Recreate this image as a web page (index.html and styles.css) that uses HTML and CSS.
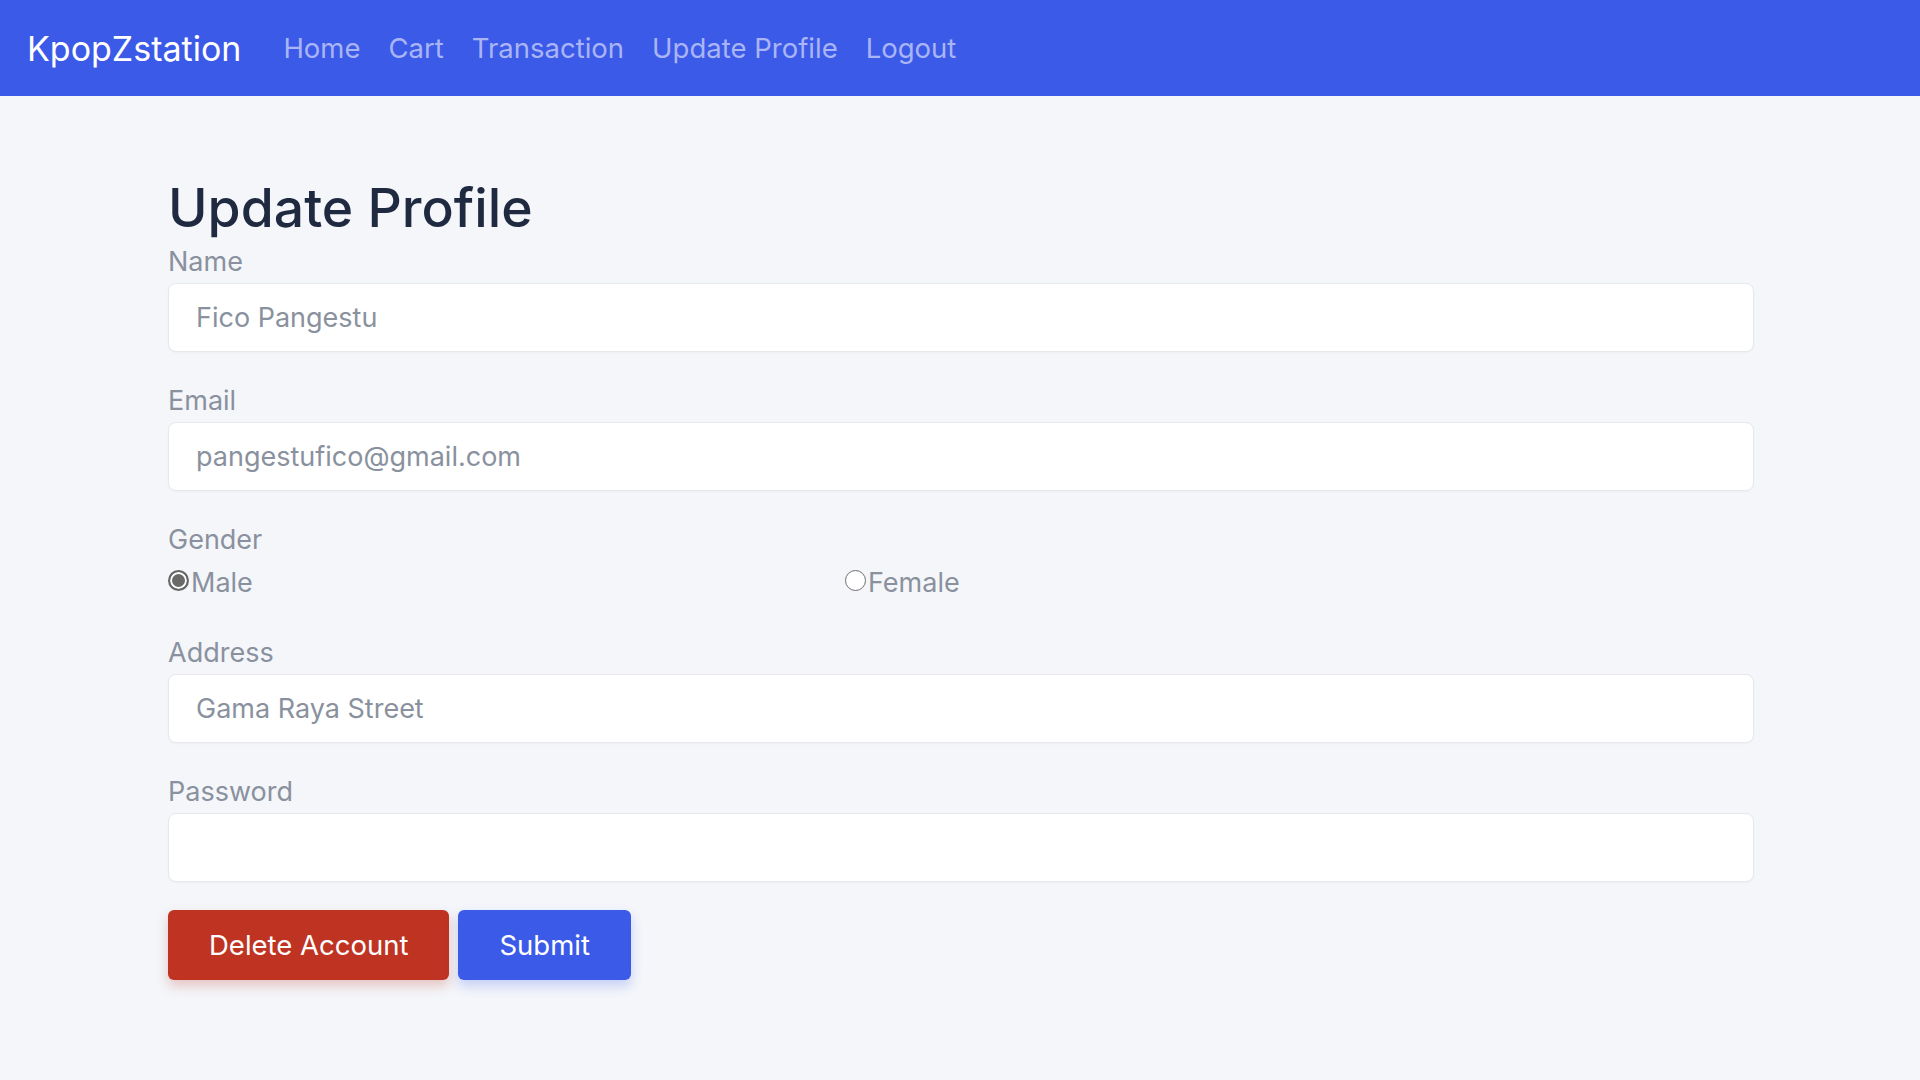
FILE: index.html
```html
<!DOCTYPE html>
<html lang="en">
<head>
    <meta charset="UTF-8">
    <title>Update Profile - KpopZstation</title>
    <link rel="stylesheet" href="styles.css">
</head>
<body>
<nav class="navbar">
    <a class="brand" href="#">KpopZstation</a>
    <ul class="nav-links">
        <li><a href="#">Home</a></li>
        <li><a href="#">Cart</a></li>
        <li><a href="#">Transaction</a></li>
        <li><a href="#">Update Profile</a></li>
        <li><a href="#">Logout</a></li>
    </ul>
</nav>
<main class="page">
    <h1 class="page-title">Update Profile</h1>
    <form class="profile-form">
        <div class="field">
            <label for="name">Name</label>
            <input id="name" type="text" value="Fico Pangestu">
        </div>
        <div class="field">
            <label for="email">Email</label>
            <input id="email" type="email" value="pangestufico@gmail.com">
        </div>
        <div class="field field-gender">
            <label>Gender</label>
            <div class="radios">
                <label class="radio"><input type="radio" name="gender" checked>Male</label>
                <label class="radio"><input type="radio" name="gender">Female</label>
            </div>
        </div>
        <div class="field">
            <label for="address">Address</label>
            <input id="address" type="text" value="Gama Raya Street">
        </div>
        <div class="field">
            <label for="password">Password</label>
            <input id="password" type="password">
        </div>
        <div class="actions">
            <button type="button" class="btn btn-delete">Delete Account</button>
            <button type="submit" class="btn btn-submit">Submit</button>
        </div>
    </form>
</main>
</body>
</html>
```

FILE: styles.css
```css
* {
    box-sizing: border-box;
}
body {
    margin: 0;
    min-height: 1080px;
    background-color: #f4f6fa;
    font-family: Inter, "Noto Sans", sans-serif;
}
.navbar {
    display: flex;
    align-items: center;
    height: 96px;
    padding: 0 27px;
    background-color: #3c5ae8;
}
.brand {
    font-size: 34px;
    color: #fff;
    text-decoration: none;
    margin-right: 42px;
}
.nav-links {
    display: flex;
    gap: 28px;
    list-style: none;
    margin: 0;
    padding: 0;
}
.nav-links a {
    font-size: 27.5px;
    color: #a9b5f4;
    text-decoration: none;
}
.page {
    padding: 82px 166px 0 168px;
}
.page-title {
    margin: 0;
    font-size: 53.5px;
    line-height: 60px;
    font-weight: 500;
    color: #1f2940;
}
.profile-form {
    margin-top: 6px;
}
.field {
    margin-bottom: 31px;
}
.field > label {
    display: block;
    font-size: 27px;
    line-height: 35px;
    color: #8a919e;
    margin-bottom: 4px;
}
.field input[type=text],
.field input[type=email],
.field input[type=password] {
    display: block;
    width: 100%;
    height: 69px;
    padding: 0 27px;
    border: 1px solid #e6e8ec;
    border-radius: 8px;
    background-color: #fff;
    box-shadow: 0 1px 2px rgba(0, 0, 0, .03);
    font-family: inherit;
    font-size: 27px;
    color: #8a919e;
    outline: none;
}
.field-gender {
    margin-bottom: 35px;
}
.radios {
    display: flex;
    margin-top: 8px;
}
.radio {
    display: flex;
    align-items: center;
    font-size: 27px;
    line-height: 35px;
    color: #8a919e;
    width: 677px;
}
.radio input {
    appearance: none;
    -webkit-appearance: none;
    flex: none;
    width: 21px;
    height: 21px;
    margin: 0 2px 5px 0;
    border: 1.5px solid #6f6f6f;
    border-radius: 50%;
    background-color: #fff;
}
.radio input:checked {
    border: 2px solid #666;
    background-color: #6a6a6a;
    box-shadow: inset 0 0 0 2px #fff;
}
.actions {
    display: flex;
    gap: 9px;
    margin-top: -3px;
}
.btn {
    height: 70px;
    padding: 0 41px;
    border: 0;
    border-radius: 6px;
    font-family: inherit;
    font-size: 27.5px;
    color: #fff;
    cursor: pointer;
}
.btn-delete {
    background-color: #bf3322;
    box-shadow: 0 6px 12px rgba(191, 51, 34, .25);
}
.btn-submit {
    background-color: #3c5ae8;
    box-shadow: 0 6px 12px rgba(60, 90, 232, .25);
}
```
